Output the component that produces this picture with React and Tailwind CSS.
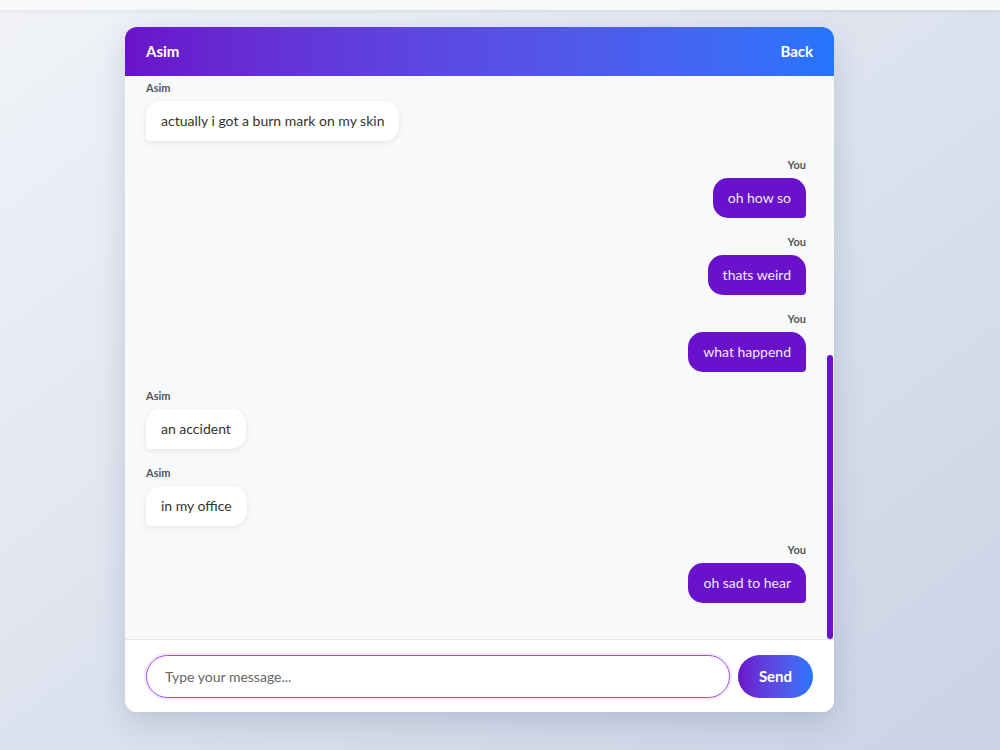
import React from "react";

const messages = [
  { from: "Asim", text: "actually i got a burn mark on my skin" },
  { from: "You", text: "oh how so" },
  { from: "You", text: "thats weird" },
  { from: "You", text: "what happend" },
  { from: "Asim", text: "an accident" },
  { from: "Asim", text: "in my office" },
  { from: "You", text: "oh sad to hear" },
];

function Message({ from, text }) {
  const mine = from === "You";
  return (
    <div className={`flex flex-col ${mine ? "items-end" : "items-start"} mb-[17px]`}>
      <div className="text-[11px] leading-[14px] font-bold text-[#555] mb-[6px]">{from}</div>
      <div
        className={
          mine
            ? "bg-[#6a11cb] text-[#f1eafd] text-[14px] leading-[20px] px-[15px] py-[10px] rounded-[15px] rounded-br-[4px]"
            : "bg-white text-[#333] text-[14px] leading-[20px] px-[15px] py-[10px] rounded-[15px] rounded-bl-[4px] shadow-[0_2px_6px_rgba(0,0,0,0.08)]"
        }
      >
        {text}
      </div>
    </div>
  );
}

export default function App() {
  return (
    <div
      className="min-h-[750px] w-full bg-gradient-to-br from-[#f1f3f8] to-[#c9d3e4] flex flex-col"
      style={{ fontFamily: "Lato, 'Noto Sans', sans-serif" }}
    >
      <div className="h-[10px] bg-[#f8f9fa] shadow-[0_1px_4px_rgba(0,0,0,0.08)]" />
      <div className="flex pt-[17px] pl-[125px]">
        <div className="w-[709px] h-[685px] bg-white rounded-[12px] overflow-hidden flex flex-col shadow-[0_10px_30px_rgba(40,60,100,0.18)]">
          <div className="h-[49px] shrink-0 bg-gradient-to-r from-[#6a11cb] to-[#2575fc] flex items-center justify-between px-[21px] text-white font-bold text-[15px]">
            <span>Asim</span>
            <span>Back</span>
          </div>
          <div className="relative flex-1 bg-[#f8f9fb] overflow-hidden">
            <div className="absolute inset-x-0 bottom-0 flex flex-col pl-[21px] pr-[28px] pb-[19px]">
              {messages.map((m, i) => (
                <Message key={i} {...m} />
              ))}
            </div>
            <div className="absolute right-[1px] bottom-0 w-[6px] h-[284px] rounded-full bg-[#6a11cb]" />
          </div>
          <div className="shrink-0 h-[73px] border-t border-[#e3e6ea] bg-white flex items-center gap-[8px] px-[21px]">
            <div className="flex-1 h-[43px] rounded-full border border-[#9b4dea] shadow-[0_0_0_2px_rgba(155,77,234,0.12)] flex items-center px-[18px] text-[14px] text-[#666]">
              Type your message...
            </div>
            <div className="w-[75px] h-[43px] rounded-full bg-gradient-to-r from-[#6a11cb] to-[#2575fc] flex items-center justify-center text-white font-bold text-[15px]">
              Send
            </div>
          </div>
        </div>
      </div>
    </div>
  );
}
